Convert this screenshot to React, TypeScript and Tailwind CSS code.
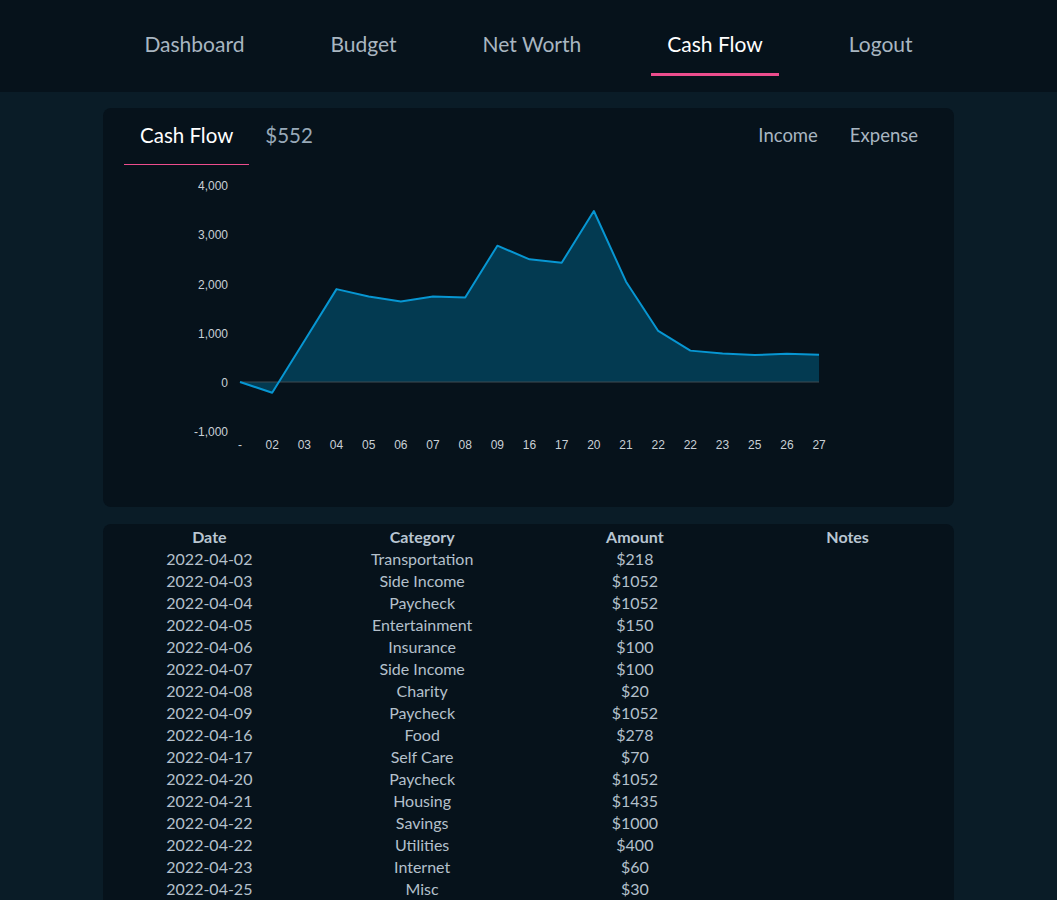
import React from 'react';

const navItems = ['Dashboard', 'Budget', 'Net Worth', 'Cash Flow', 'Logout'];

const transactions = [
  { date: '2022-04-02', category: 'Transportation', amount: -218 },
  { date: '2022-04-03', category: 'Side Income', amount: 1052 },
  { date: '2022-04-04', category: 'Paycheck', amount: 1052 },
  { date: '2022-04-05', category: 'Entertainment', amount: -150 },
  { date: '2022-04-06', category: 'Insurance', amount: -100 },
  { date: '2022-04-07', category: 'Side Income', amount: 100 },
  { date: '2022-04-08', category: 'Charity', amount: -20 },
  { date: '2022-04-09', category: 'Paycheck', amount: 1052 },
  { date: '2022-04-16', category: 'Food', amount: -278 },
  { date: '2022-04-17', category: 'Self Care', amount: -70 },
  { date: '2022-04-20', category: 'Paycheck', amount: 1052 },
  { date: '2022-04-21', category: 'Housing', amount: -1435 },
  { date: '2022-04-22', category: 'Savings', amount: -1000 },
  { date: '2022-04-22', category: 'Utilities', amount: -400 },
  { date: '2022-04-23', category: 'Internet', amount: -60 },
  { date: '2022-04-25', category: 'Misc', amount: -30 },
  { date: '2022-04-26', category: 'Side Income', amount: 25 },
  { date: '2022-04-27', category: 'Food', amount: -20 },
];

// running balance, first point is the starting 0
const points: { label: string; value: number }[] = [{ label: '-', value: 0 }];
transactions.reduce((acc, t) => {
  const next = acc + t.amount;
  points.push({ label: t.date.slice(8), value: next });
  return next;
}, 0);

function CashFlowChart() {
  const x0 = 137;
  const step = 32.17;
  const zeroY = 217;
  const scale = 0.04925;
  const yOf = (v: number) => zeroY - v * scale;
  const xOf = (i: number) => x0 + i * step;

  const line = points.map((p, i) => `${i === 0 ? 'M' : 'L'}${xOf(i)},${yOf(p.value)}`).join(' ');
  const area = `${line} L${xOf(points.length - 1)},${zeroY} L${x0},${zeroY} Z`;
  const ticks = [4000, 3000, 2000, 1000, 0, -1000];

  return (
    <svg width="851" height="342" viewBox="0 0 851 342" className="block">
      <path d={area} fill="#033a51" />
      <line x1={x0} x2={xOf(points.length - 1)} y1={zeroY} y2={zeroY} stroke="#3f4a52" strokeWidth="1" />
      <path d={line} fill="none" stroke="#0796d2" strokeWidth="2" strokeLinejoin="round" />
      {ticks.map((t) => (
        <text
          key={t}
          x={125}
          y={yOf(t) + 2}
          textAnchor="end"
          dominantBaseline="middle"
          fontSize="12"
          fill="#c9d0d6"
          fontFamily="'Liberation Sans', Arial, sans-serif"
        >
          {t.toLocaleString('en-US')}
        </text>
      ))}
      {points.map((p, i) => (
        <text
          key={i}
          x={xOf(i)}
          y={281}
          textAnchor="middle"
          dominantBaseline="middle"
          fontSize="12"
          fill="#c9d0d6"
          fontFamily="'Liberation Sans', Arial, sans-serif"
        >
          {p.label}
        </text>
      ))}
    </svg>
  );
}

export default function App() {
  const total = transactions.reduce((a, t) => a + t.amount, 0);

  return (
    <div className="min-h-screen bg-[#0a1c27] font-['Lato','Noto_Sans',sans-serif] text-[#b4c0cb]">
      {/* Top nav */}
      <nav className="h-[92px] bg-[#06121b] flex justify-center gap-[54px]">
        {navItems.map((item) => (
          <a
            key={item}
            className={
              item === 'Cash Flow'
                ? 'px-4 pt-[29px] pb-[14px] leading-[30px] text-[21px] text-white border-b-[3px] border-[#ec4d8d] h-[76px]'
                : 'px-4 pt-[29px] pb-[14px] leading-[30px] text-[21px] text-[#a9b6c1] border-b-[3px] border-transparent h-[76px]'
            }
          >
            {item}
          </a>
        ))}
      </nav>

      <main className="w-[851px] mx-auto pt-4 flex flex-col gap-[17px]">
        {/* Chart card */}
        <section className="bg-[#06121b] rounded-lg h-[399px]">
          <div className="flex items-start justify-between px-[21px] pr-[20px]">
            <div className="flex items-center">
              <div className="px-4 h-[57px] pb-[2px] flex items-center text-[20.5px] text-white border-b border-[#ec4d8d]">
                Cash Flow
              </div>
              <div className="px-4 h-[57px] pb-[2px] flex items-center text-[20.5px] text-[#98a9b8]">
                ${total}
              </div>
            </div>
            <div className="flex items-center">
              <div className="px-4 h-[57px] pb-[2px] flex items-center text-[18.5px] text-[#a9b6c1]">Income</div>
              <div className="px-4 h-[57px] pb-[2px] flex items-center text-[18.5px] text-[#a9b6c1]">Expense</div>
            </div>
          </div>
          <CashFlowChart />
        </section>

        {/* Transactions */}
        <section className="bg-[#06121b] rounded-lg pt-[2px] pb-2">
          <div className="grid grid-cols-4 text-center text-[16px] leading-[22px] font-bold text-[#b9c6d2]">
            <div>Date</div>
            <div>Category</div>
            <div>Amount</div>
            <div>Notes</div>
          </div>
          {transactions.map((t, i) => (
            <div key={i} className="grid grid-cols-4 text-center text-[16px] leading-[22px] text-[#b4c0cb]">
              <div>{t.date}</div>
              <div>{t.category}</div>
              <div>${Math.abs(t.amount)}</div>
              <div></div>
            </div>
          ))}
        </section>
      </main>
    </div>
  );
}
